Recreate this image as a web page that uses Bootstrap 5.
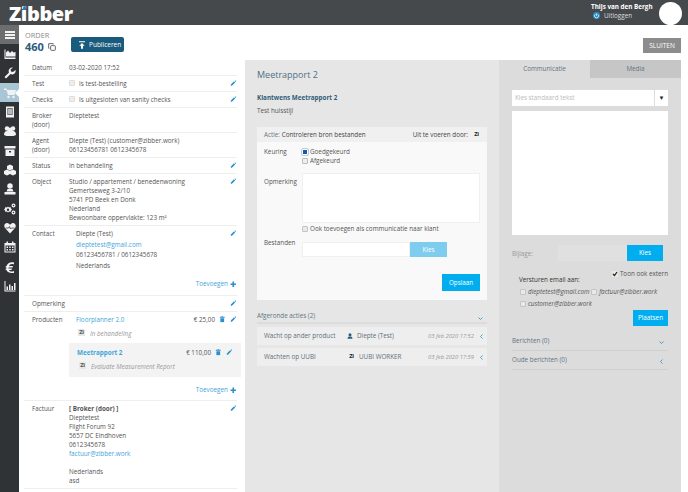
<!DOCTYPE html>
<html lang="nl"><head><meta charset="utf-8"><title>Zibber</title>
<link rel="stylesheet" href="https://cdn.jsdelivr.net/npm/bootstrap@5.3.0/dist/css/bootstrap.min.css">
<style>
html,body{height:492px;overflow:hidden;margin:0}
body{font:6.3px/9px "Open Sans",sans-serif;color:#555;background:#fff}
.top-hdr{height:25px;background:#46494c;color:#fff;padding-left:9px}
.brand{font:800 20px/28px "Open Sans",sans-serif;letter-spacing:-.4px;position:relative;width:66px;height:25px;white-space:nowrap}
.brand-dot{position:absolute;left:13.500px;top:6px;width:3.500px;height:3.500px;border-radius:50%;background:#2a7fc1}
.who{width:62px;margin-right:6px;padding-top:2px}
.who b{display:block;line-height:9px;white-space:nowrap}
.who span{line-height:9px;color:#ddd}
.avatar{width:23px;height:23px;border-radius:50%;background:#fff;margin:2px 6px 0 0}
.side{width:19px;background:#2f3336;flex:none;height:467px}
.side-i{height:19.35px;position:relative;color:#fff}
.side-i svg{width:12px;height:12px;fill:#f2f2f2}
.side-on0{background:#6c6d6f}
.side-on{background:#a9c6d6}
.side-on::after{content:"";position:absolute;right:0;top:6px;border:4px solid transparent;border-right-color:#fff}
.main{min-width:0;height:467px}
.bar{height:35px;padding:0 7px 0 6px}
.ord{padding-top:6px;width:46px}
.ord-l{font-size:7.400px;line-height:9px;color:#8a8a8a}
.ord-n{font-size:11px;line-height:12px;font-weight:700;color:#2c5c7c;margin-top:1px}
.pub{background:#1a5a7c;color:#fff;font-size:6.500px;line-height:9px;padding:3px 3px 3px 7px;border-radius:2px;height:15px;width:53px;margin-top:12px;white-space:nowrap}
.pub svg{flex:none;margin-right:3px}
.close-b{background:#8c8c8c;color:#fff;font-size:6.500px;line-height:15px;height:15px;width:38px;text-align:center;margin-top:13px}
.leftc{width:226px;flex:none;padding:0 8px 0 5px}
.rw{border-bottom:1px solid #eee;padding:3px 0 3px 8px;min-height:16px;position:relative}
.lb{width:37px;flex:none}
.val{flex:1;min-width:0}
.pen{width:6.500px;height:6.500px;fill:#2a8fcb;flex:none;margin:1px 1px 0 0}
.blue{color:#42a5d9}
.tg{border:1px solid #ddd;background:#eee;width:6px;height:6px;margin:1px 4px 0 0;flex:none;border-radius:1px}
.ctc{line-height:10.7px;padding-left:7px;height:38px}
.add{color:#42a5d9;text-align:right;padding-right:1px}
.add-c{height:17px;margin-top:8px;padding-top:4px}
.add-p{height:20px;padding-top:7.500px}
.prod{padding-left:7px}
.prod-st{color:#999;font-style:italic;padding:5px 0 0 2px;height:19px}
.zi{font:700 5.800px/7px "Open Sans",sans-serif;background:#e7e7e7;color:#555;width:7px;height:7px;display:inline-block;text-align:center;margin-right:5px;letter-spacing:-.4px;vertical-align:top}
.mbox{background:#f3f3f3;margin:0 -4px 0 -7px;padding:5px 8px;height:34px}
.midc{width:254px;flex:none;background:#e6e6e6;padding:8px 12px 0 12px;height:432px}
.ttl{font-size:9px;line-height:14px;color:#4f6f83}
.kw{font-weight:700;color:#2f5d78;margin-top:11px}
.tcard{background:#f9f9f9;margin-top:12px;height:173px}
.tcard-h{background:#f0f0f0;height:15px;line-height:15px;padding:0 7px;color:#444}
.frm{padding:5px 7px}
.f-l{width:38px;flex:none}
.rad{width:6px;height:6px;border:1px solid #bbb;border-radius:1px;background:#eee;margin:1.500px 2px 0 0;display:inline-block;vertical-align:top}
.rad-on{background:#1a5a9c;outline:1px solid #b9cbe0;border-color:#fff}
.tb{background:#fff;border:1px solid #f0f0f0}
.btn-k{background:#00aeef;color:#fff;text-align:center}
.done-h{height:16px;border-bottom:2px solid #dcdcdc;margin-top:8px;color:#607585;line-height:16px}
.done-r{background:#eee;height:18px;margin-top:3px;line-height:18px;padding:0 3px 0 7px;color:#5f6f7a}
.chev{width:5px;height:5px;fill:none;stroke:#4a9fd0;stroke-width:2;flex:none}
.dt{font-style:italic;color:#999;font-size:5.800px;width:52px;text-align:right;margin-right:5px;white-space:nowrap}
.rightc{width:182px;flex:none;background:#dcdcdc;height:432px}
.tabx{height:18px;line-height:18px;width:91px;text-align:center;color:#5f7585}
.tabx-off{background:#c6c6c6}
.rin{padding:12px 13px}
.sel{background:#fff;height:16px;line-height:16px;padding-left:3px;color:#bbb}
.sel-a{width:14px;border-left:1px solid #ddd;color:#222;text-align:center;font-size:6px}
.ta{background:#fff;height:124px;margin-top:5px}
.cb{width:6px;height:6px;border:1px solid #c4c4c4;background:#e9e9e9;display:inline-block;margin-right:2px;vertical-align:-1px;border-radius:1px}
.chk{width:6px;height:6px;margin-right:2px;vertical-align:-1px;background:#e9e9e9}
.acc{height:19px;border-bottom:1px solid #cfcfcf;color:#5f7585;line-height:9px;padding-top:4px}
</style></head><body>
<svg width="0" height="0" class="position-absolute"><defs>
<symbol id="pen" viewBox="0 0 24 24"><path d="M3 17 15 5l4 4L7 21H3zM17 3l2-2 4 4-2 2z"/></symbol>
<symbol id="plus" viewBox="0 0 24 24"><path d="M9 2h6v7h7v6h-7v7H9v-7H2V9h7z"/></symbol>
<symbol id="trash" viewBox="0 0 24 24"><path d="M9 1h6v2h6v3H3V3h6zM5 8h14v15H5z"/></symbol>
<symbol id="person" viewBox="0 0 24 24"><circle cx="12" cy="7" r="6"/><path d="M2 23c0-7 4-9 10-9s10 2 10 9z"/></symbol>
</defs></svg>
<header class="top-hdr d-flex justify-content-between">
 <div class="brand">Zibber<span class="brand-dot"></span></div>
 <div class="d-flex">
  <div class="who"><b>Thijs van den Bergh</b>
   <div class="d-flex align-items-center"><svg width="7" height="7" viewBox="0 0 24 24" style="margin:0 4px 0 2px"><circle cx="12" cy="12" r="12" fill="#2a8fcb"/><path d="M7.500 8a7 7 0 1 0 9 0M12 5v8" stroke="#fff" stroke-width="2.500" fill="none"/></svg><span>Uitloggen</span></div></div>
  <div class="avatar"></div>
 </div>
</header>
<div class="d-flex">
 <nav class="side">
  <div class="side-i side-on0 d-flex align-items-center justify-content-center"><svg viewBox="0 0 24 24"><path d="M2 4h20v4H2zM2 10h20v4H2zM2 16h20v4H2z"/></svg></div>
  <div class="side-i d-flex align-items-center justify-content-center"><svg viewBox="0 0 24 24"><path d="M1 3h2v16h20v3H1zM4 17V9l4-4 4 5 4-4 3 3 4-1v9z"/></svg></div>
  <div class="side-i d-flex align-items-center justify-content-center"><svg viewBox="0 0 24 24"><path d="M16 1a7 7 0 0 0-6 10L1 20l3 3 9-9a7 7 0 0 0 10-8l-5 4-4-1-1-4 5-4z"/></svg></div>
  <div class="side-i side-on d-flex align-items-center justify-content-center"><svg viewBox="0 0 24 24"><path d="M0 3h5l1 3h18l-3 10H8L5 6H0z"/><circle cx="9" cy="20" r="2.500"/><circle cx="19" cy="20" r="2.500"/></svg></div>
  <div class="side-i d-flex align-items-center justify-content-center"><svg viewBox="0 0 24 24"><path d="M4 1h16v22H4zM7 4v14h10V4z"/><path d="M8 5h8v12H8z" opacity=".7"/></svg></div>
  <div class="side-i d-flex align-items-center justify-content-center"><svg viewBox="0 0 24 24"><circle cx="6" cy="7" r="4.500"/><circle cx="18" cy="7" r="4.500"/><circle cx="12" cy="10" r="5"/><path d="M0 20c0-6 3-8 6-8h12c3 0 6 2 6 8l-5 2H5z"/></svg></div>
  <div class="side-i d-flex align-items-center justify-content-center"><svg viewBox="0 0 24 24"><path d="M1 2h22v5H1zM3 9h18v13H3zM10 12v3h4v-3z"/></svg></div>
  <div class="side-i d-flex align-items-center justify-content-center"><svg viewBox="0 0 24 24"><path d="M12 1l6 3v6l-6 3-6-3V4zM6 11l6 3v6l-6 3-6-3v-6zM18 11l6 3v6l-6 3-6-3v-6z"/></svg></div>
  <div class="side-i d-flex align-items-center justify-content-center"><svg viewBox="0 0 24 24"><circle cx="12" cy="6" r="5.500"/><path d="M7 12h10l2 5H5zM1 18h22v5H1z"/></svg></div>
  <div class="side-i d-flex align-items-center justify-content-center"><svg viewBox="0 0 24 24"><path fill-rule="evenodd" d="M8 7l2 2 3-1 1 3 2 2-2 2-1 3-3-1-2 2-2-2-3 1-1-3-2-2 2-2 1-3 3 1zM8 11a2.500 2.500 0 1 0 0 5 2.500 2.500 0 0 0 0-5z"/><path fill-rule="evenodd" d="M19 1a4 4 0 1 1 0 8 4 4 0 0 1 0-8zm0 2.500a1.500 1.500 0 1 0 0 3 1.500 1.500 0 0 0 0-3zM19 15a4 4 0 1 1 0 8 4 4 0 0 1 0-8zm0 2.500a1.500 1.500 0 1 0 0 3 1.500 1.500 0 0 0 0-3z"/></svg></div>
  <div class="side-i d-flex align-items-center justify-content-center"><svg viewBox="0 0 24 24"><path d="M12 23 2 12C-1 8 1 2 6 2c3 0 5 2 6 4 1-2 3-4 6-4 5 0 7 6 4 10z"/><path d="M3 12h6l2-3 2 5 2-2h6" stroke="#2f3336" stroke-width="1.500" fill="none"/></svg></div>
  <div class="side-i d-flex align-items-center justify-content-center"><svg viewBox="0 0 24 24"><path fill-rule="evenodd" d="M5 1h3v3h8V1h3v3h4v19H1V4h4zM3 9v12h18V9zM5 11h3v3H5zM10.500 11h3v3h-3zM16 11h3v3h-3zM5 16h3v3H5zM10.500 16h3v3h-3zM16 16h3v3h-3z"/></svg></div>
  <div class="side-i d-flex align-items-center justify-content-center"><svg viewBox="0 0 24 24"><path d="M20 3v4c-5-2-9 0-10 3h8l-1 3H9v2h7l-1 3H10c1 3 5 4 10 2v4C12 25 6 22 5 18H3l1-3h1v-2H3l1-3h1C7 4 13 1 20 3z"/></svg></div>
  <div class="side-i d-flex align-items-center justify-content-center"><svg viewBox="0 0 24 24"><path d="M1 2h2v19h20v2H1zM5 13h3v7H5zM10 9h3v11h-3zM15 12h3v8h-3zM20 6h3v14h-3z"/></svg></div>
 </nav>
 <div class="main flex-grow-1">
  <div class="bar d-flex justify-content-between">
   <div class="d-flex"><div class="ord"><div class="ord-l">ORDER</div><div class="ord-n d-flex align-items-center">460<svg class="ms-1" width="8" height="8" viewBox="0 0 24 24" fill="none" stroke="#666" stroke-width="3"><rect x="8" y="8" width="14" height="14" rx="2"/><path d="M4 16H2V2h14v2"/></svg></div></div>
    <div class="pub d-flex align-items-center"><svg width="8" height="8" viewBox="0 0 24 24" fill="#fff"><path d="M3 1h18v3H3zM12 6l8 8h-5v9H9v-9H4z"/></svg>Publiceren</div></div>
   <div class="close-b">SLUITEN</div>
  </div>
  <div class="d-flex">
   <section class="leftc">
    <div class="rw d-flex"><div class="lb">Datum</div><div class="val">03-02-2020 17:52</div></div>
    <div class="rw d-flex"><div class="lb">Test</div><div class="val d-flex"><span class="tg"></span>Is test-bestelling</div><svg class="pen"><use href="#pen"/></svg></div>
    <div class="rw d-flex"><div class="lb">Checks</div><div class="val d-flex"><span class="tg"></span>Is uitgesloten van sanity checks</div><svg class="pen"><use href="#pen"/></svg></div>
    <div class="rw d-flex"><div class="lb">Broker<br>(door)</div><div class="val">Dieptetest</div></div>
    <div class="rw d-flex"><div class="lb">Agent<br>(door)</div><div class="val">Diepte (Test) (customer@zibber.work)<br>06123456781 0612345678</div></div>
    <div class="rw d-flex"><div class="lb">Status</div><div class="val">In behandeling</div><svg class="pen"><use href="#pen"/></svg></div>
    <div class="rw d-flex"><div class="lb">Object</div><div class="val">Studio / appartement / benedenwoning<br>Gemertseweg 3-2/10<br>5741 PD Beek en Donk<br>Nederland<br>Bewoonbare oppervlakte: 123 m²</div><svg class="pen"><use href="#pen"/></svg></div>
    <div class="rw">
     <div class="d-flex"><div class="lb">Contact</div><div class="val ctc">Diepte (Test)<br><span class="blue">dieptetest@gmail.com</span><br>06123456781 / 0612345678<br>Nederlands</div><svg class="pen"><use href="#pen"/></svg></div>
     <div class="add add-c">Toevoegen <svg class="pen m-0"><use href="#plus"/></svg></div>
    </div>
    <div class="rw d-flex"><div class="lb">Opmerking</div><div class="val"></div><svg class="pen"><use href="#pen"/></svg></div>
    <div class="rw">
     <div class="d-flex"><div class="lb">Producten</div><div class="val prod">
       <div class="d-flex justify-content-between"><span class="blue">Floorplanner 2.0</span><span class="d-flex">€ 25,00<svg class="pen ms-1 me-1"><use href="#trash"/></svg><svg class="pen"><use href="#pen"/></svg></span></div>
       <div class="prod-st"><span class="zi">Zi</span>In behandeling</div>
       <div class="mbox">
        <div class="d-flex justify-content-between"><b class="blue">Meetrapport 2</b><span class="d-flex">€ 110,00<svg class="pen ms-1 me-1"><use href="#trash"/></svg><svg class="pen"><use href="#pen"/></svg></span></div>
        <div class="prod-st"><span class="zi">Zi</span>Evaluate Measurement Report</div>
       </div>
     </div></div>
     <div class="add add-p">Toevoegen <svg class="pen m-0"><use href="#plus"/></svg></div>
    </div>
    <div class="rw d-flex"><div class="lb">Factuur</div><div class="val"><b>[ Broker (door) ]</b><br>Dieptetest<br>Flight Forum 92<br>5657 DC Eindhoven<br>0612345678<br><span class="blue">factuur@zibber.work</span><br><br>Nederlands<br>asd</div><svg class="pen"><use href="#pen"/></svg></div>
   </section>
   <section class="midc">
    <div class="ttl">Meetrapport 2</div>
    <div class="kw">Klantwens Meetrapport 2</div>
    <div class="mt-1">Test huisstijl</div>
    <div class="tcard">
     <div class="tcard-h d-flex justify-content-between"><span><span class="text-secondary">Actie:</span> Controleren bron bestanden</span><span class="d-flex align-items-center">Uit te voeren door:<span class="zi me-0 bg-transparent text-dark" style="margin-left:5px">Zi</span></span></div>
     <div class="frm">
      <div class="d-flex"><div class="f-l">Keuring</div><div><span class="rad rad-on"></span>Goedgekeurd<br><span class="rad"></span>Afgekeurd</div></div>
      <div class="d-flex mt-2"><div class="f-l pt-1">Opmerking</div><div class="tb flex-grow-1" style="height:50px"></div></div>
      <div class="d-flex" style="margin-top:1px"><div class="f-l"></div><div><span class="cb"></span>Ook toevoegen als communicatie naar klant</div></div>
      <div class="d-flex" style="margin-top:9px"><div class="f-l" style="margin-top:-4px">Bestanden</div><div class="tb" style="width:108px;height:15px"></div><div class="btn-k" style="width:37px;height:15px;line-height:15px;background:#7fcdee">Kies</div></div>
      <div class="d-flex justify-content-end" style="margin-top:17px"><div class="btn-k" style="width:38px;height:17px;line-height:17px">Opslaan</div></div>
     </div>
    </div>
    <div class="done-h d-flex justify-content-between">Afgeronde acties (2)<svg class="chev mt-2 me-1" viewBox="0 0 10 10"><path d="M1 3l4 4 4-4"/></svg></div>
    <div class="done-r d-flex align-items-center"><div style="width:83px">Wacht op ander product</div><div class="flex-grow-1"><svg width="6" height="6" fill="#2c5c7c" class="me-1"><use href="#person"/></svg>Diepte (Test)</div><div class="dt">03 feb 2020 17:52</div><svg class="chev" viewBox="0 0 10 10"><path d="M7 1 3 5l4 4"/></svg></div>
    <div class="done-r d-flex align-items-center"><div style="width:84px">Wachten op UUBI</div><div class="flex-grow-1"><span class="zi bg-transparent text-dark" style="margin-top:5px;margin-right:4px">Zi</span>UUBI WORKER</div><div class="dt">03 feb 2020 17:59</div><svg class="chev" viewBox="0 0 10 10"><path d="M7 1 3 5l4 4"/></svg></div>
   </section>
   <section class="rightc">
    <div class="d-flex"><div class="tabx">Communicatie</div><div class="tabx tabx-off">Media</div></div>
    <div class="rin">
     <div class="sel d-flex justify-content-between"><span>Kies standaard tekst</span><span class="sel-a">▼</span></div>
     <div class="ta"></div>
     <div class="d-flex align-items-center" style="margin-top:10px;height:16px"><div style="width:46px;color:#999">Bijlage:</div><div style="width:69px;height:16px;background:#e0e0e0"></div><div class="btn-k" style="width:36px;height:16px;line-height:16px">Kies</div></div>
     <div class="d-flex justify-content-end" style="margin-top:8px"><span><svg class="chk" viewBox="0 0 12 12"><path d="M2 6l3 3 5-7" fill="none" stroke="#222" stroke-width="2.500"/></svg>Toon ook extern</span></div>
     <div style="color:#333;margin:-3px 0 0 7px">Versturen email aan:</div>
     <div class="fst-italic" style="margin:3px 0 0 8px;white-space:nowrap"><span class="cb"></span>dieptetest@gmail.com <span class="cb"></span>factuur@zibber.work</div>
     <div class="fst-italic" style="margin:3px 0 0 8px"><span class="cb"></span>customer@zibber.work</div>
     <div class="d-flex justify-content-end" style="margin-top:2px"><div class="btn-k" style="width:35px;height:16px;line-height:16px">Plaatsen</div></div>
     <div class="acc d-flex justify-content-between" style="margin-top:6px">Berichten (0)<svg class="chev mt-1 me-1" viewBox="0 0 10 10"><path d="M1 3l4 4 4-4"/></svg></div>
     <div class="acc d-flex justify-content-between">Oude berichten (0)<svg class="chev mt-1 me-1" viewBox="0 0 10 10"><path d="M7 1 3 5l4 4"/></svg></div>
    </div>
   </section>
  </div>
 </div>
</div>
</body></html>
